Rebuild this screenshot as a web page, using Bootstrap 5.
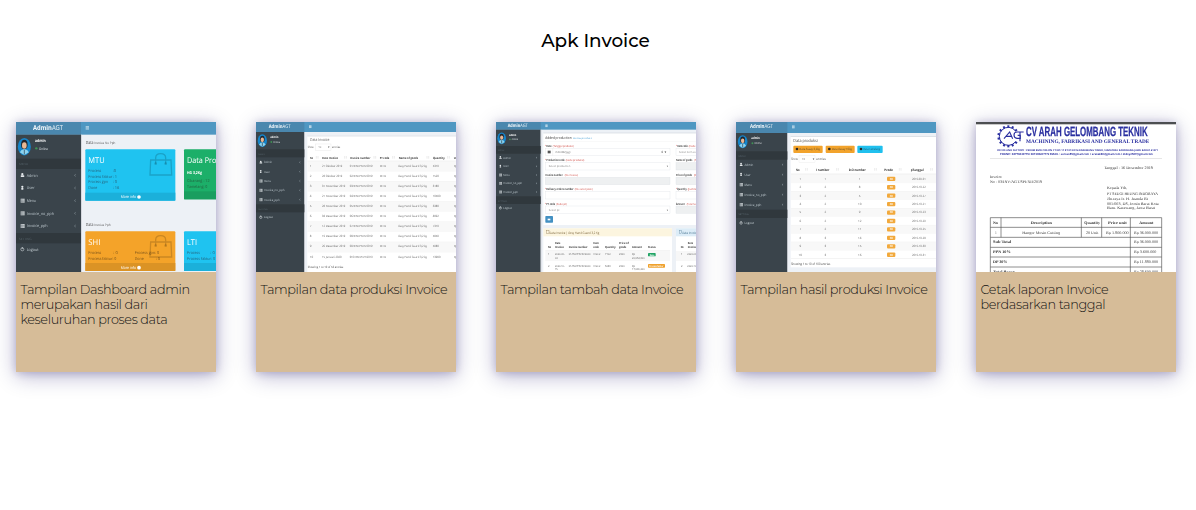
<!DOCTYPE html>
<html lang="id">
<head>
<meta charset="utf-8">
<meta name="viewport" content="width=device-width, initial-scale=1">
<title>Apk Invoice</title>
<link href="https://cdn.jsdelivr.net/npm/bootstrap@5.3.0/dist/css/bootstrap.min.css" rel="stylesheet">
<style>
body { font-family: Montserrat, Inter, sans-serif; color: #000; background: #fff; }
main { min-height: 510px; padding-top: 28px; }
.page-title { font-size: 18.4px; font-weight: 500; line-height: 24px; margin: 1px 5px 69px 0; color: #000; }
.gallery { gap: 40px; padding-left: 16px; }
.shot { width: 200px; height: 250px; background: #d6bc98; box-shadow: 0 1px 8px 0 rgba(20,10,100,.2), 0 4px 20px 0 rgba(20,10,100,.3); }
.shot svg { display: block; width: 200px; height: 150px; font-family: "Open Sans", sans-serif; text-rendering: geometricPrecision; }
.shot .soft { filter: blur(1.4px); }
.shot p { font-size: 12.8px; letter-spacing: -.36px; font-weight: 300; line-height: 15px; margin: 0; padding: 10px 0 0 4.5px; white-space: nowrap; color: #111; }
</style>
</head>
<body>
<main>
<h1 class="page-title text-center">Apk Invoice</h1>
<section class="gallery d-flex">
  <article class="shot flex-shrink-0"><svg id="dash" viewBox="48 36 600 450"></svg>
    <p>Tampilan Dashboard admin<br>merupakan hasil dari<br>keseluruhan proses data</p></article>
  <article class="shot flex-shrink-0"><svg id="list" viewBox="33 36 600 450"></svg>
    <p>Tampilan data produksi Invoice</p></article>
  <article class="shot flex-shrink-0"><svg id="form" viewBox="33 36 600 450"></svg>
    <p>Tampilan tambah data Invoice</p></article>
  <article class="shot flex-shrink-0"><svg id="prod" viewBox="33 36 600 450"></svg>
    <p>Tampilan hasil produksi Invoice</p></article>
  <article class="shot flex-shrink-0"><svg id="paper" viewBox="33 36 600 450"></svg>
    <p>Cetak laporan Invoice<br>berdasarkan tanggal</p></article>
</section>
</main>
<script src="https://cdn.jsdelivr.net/npm/bootstrap@5.3.0/dist/js/bootstrap.bundle.min.js"></script>
<script>
// Drawing helpers: rectangle, text fitted to a width, and path
const R = (x, y, w, h, f, more = '') => `<rect x="${x}" y="${y}" width="${w}" height="${h}" fill="${f}" ${more}/>`;
const T = (x, y, s, size, f, w, more = '') => `<text x="${x}" y="${y}" font-size="${size}" fill="${f}" ${w ? `textLength="${w}" lengthAdjust="spacingAndGlyphs"` : ''} ${more}>${s}</text>`;
const P = (d, stroke, w = 1, fill = 'none') => `<path d="${d}" stroke="${stroke}" stroke-width="${w}" fill="${fill}"/>`;
const B = 'font-weight="700"';
const put = (id, s) => document.getElementById(id).innerHTML = `<g class="soft">${s}</g>`;

// Left navigation with top bar, shared by the four admin screens
function shell(o) {
  const { x, w, head, k } = o, r = x + w;
  let s = R(x - 5, 31, 610, 460, '#edf1f6') + R(x - 5, 31, 610, head - 31, '#4f97c2') + R(x - 5, 31, w + 5, head - 31, '#4a87ae');
  s += R(x - 5, head, w + 5, 491 - head, '#3a444b') + R(r, head, 2, 491 - head, '#c9cdd2');
  s += `<text x="${o.logo}" y="${o.logoY}" font-size="${20 * k}" fill="#f4f8fb" textLength="${o.logoW}" lengthAdjust="spacingAndGlyphs"><tspan font-weight="700">Admin</tspan>AGT</text>`;
  const bx = r + 14, by = o.logoY - 9 * k;
  s += P(`M${bx} ${by}h${10 * k}m-${10 * k} ${3.6 * k}h${10 * k}m-${10 * k} ${3.6 * k}h${10 * k}`, '#e8f2f8', 2);
  const [ax, ay] = o.av, a = o.ar;
  s += `<ellipse cx="${ax}" cy="${ay}" rx="${a}" ry="${a * 1.35}" fill="#1685cb"/><ellipse cx="${ax}" cy="${ay - a * .35}" rx="${a * .5}" ry="${a * .72}" fill="#23262c"/><ellipse cx="${ax}" cy="${ay - a * .17}" rx="${a * .36}" ry="${a * .5}" fill="#e8b895"/>`;
  s += P(`M${ax - a * .7} ${ay + a * .85}Q${ax - a * .5} ${ay + a * .4} ${ax} ${ay + a * .35}Q${ax + a * .5} ${ay + a * .4} ${ax + a * .7} ${ay + a * .85}L${ax} ${ay + a * 1.3}Z`, 'none', 0, '#8ed3ee') + P(`M${ax} ${ay + a * .45}v${a * .75}`, '#26394c', 2);
  s += T(o.tx, o.nameY, 'admin', 12 * k, '#fff', 32 * k, B);
  s += `<circle cx="${o.tx + 4 * k}" cy="${o.onY - 4 * k}" r="${3.6 * k}" fill="#3f9354"/>` + T(o.tx + 12 * k, o.onY, 'Online', 10 * k, '#dce1e5', 27 * k);
  const [m0, m1] = o.bandA, [n0, n1] = o.bandB;
  s += R(x - 5, m0, w + 5, m1 - m0, '#30383d') + T(x + 9 * k, (m0 + m1) / 2 + 4, 'MENU', 9 * k, '#56636b', 27 * k);
  s += R(x - 5, n0, w + 5, n1 - n0, '#30383d') + T(x + 9 * k, (n0 + n1) / 2 + 4, 'SETTING', 9 * k, '#56636b', 38 * k);
  ['Admin', 'User', 'Menu', 'Invoice_no_pph', 'Invoice_pph'].forEach((n, i) => {
    const y = o.ys[i], ix = x + 14 * k;
    s += i < 2 ? `<circle cx="${ix + 5 * k}" cy="${y - 3.4 * k}" r="${3.4 * k}" fill="#e5e9ec"/>` + R(ix + (i ? 1.5 : 0) * k, y, (i ? 7 : 11) * k, 5 * k, '#e5e9ec', 'rx="2"')
      : R(ix, y - 6 * k, 12 * k, 12 * k, '#c4cacd') + P(`M${ix} ${y - 1.5 * k}h${12 * k}m-${12 * k} ${4 * k}h${12 * k}M${ix + 3.5 * k} ${y - 6 * k}v${12 * k}`, '#596269', 1);
    s += T(x + 32 * k, y + 4 * k, n, 12 * k, '#bcc7cd', [33, 23, 28, 82, 63][i] * k);
    s += P(`M${r - 16 * k} ${y - 3 * k}l-${3.5 * k} ${3 * k}l${3.5 * k} ${3 * k}`, '#a9b5bb', 1.4);
  });
  const y = o.out, ix = x + 19 * k;
  s += `<circle cx="${ix}" cy="${y}" r="${4.6 * k}" fill="none" stroke="#d0d7da" stroke-width="1.8"/>` + P(`M${ix} ${y - 7 * k}v${6 * k}`, '#d0d7da', 2) + T(x + 32 * k, y + 4 * k, 'Logout', 12 * k, '#c6d0d5', 36 * k);
  return s;
}

// Dashboard
let s = shell({ x: 48, w: 195, head: 74, k: 1, logo: 99, logoY: 59, logoW: 90, av: [73, 110], ar: 19.5, tx: 105, nameY: 97, onY: 119, bandA: [146, 177], bandB: [369, 400], ys: [196, 234, 272, 310, 348], out: 418 });
const bag = (x, y) => P(`M${x + 3} ${y + 20}h61l2 45h-65zM${x + 18} ${y + 31}v-17q0-13 15-13t15 13v17`, 'rgba(0,0,0,.17)', 4) + `<circle cx="${x + 18}" cy="${y + 31}" r="4" fill="rgba(0,0,0,.16)"/><circle cx="${x + 48}" cy="${y + 31}" r="4" fill="rgba(0,0,0,.16)"/>`;
const tile = (x, y, w, c, dark, h = 154) => R(x, y, w, h, c, 'rx="3"') + R(x, y + h - 24, w, 24, dark);
const info = (x, y) => T(x, y, 'More info', 12, '#fff', 46) + `<circle cx="${x + 55}" cy="${y - 4}" r="5.5" fill="#fff"/>`;
s += T(257, 101, 'Data', 13, '#444', 23) + T(283, 101, 'Invoice No Pph', 9.5, '#555', 63);
s += T(257, 347, 'Data', 13, '#444', 23) + T(283, 347, 'Invoice Pph', 9.5, '#555', 49);
s += tile(256, 118, 270, '#1fc3f0', '#1bb0da') + bag(449, 130) + T(265, 158, 'MTU', 24, '#fff', 49) + info(362, 265);
['Process|:0', 'Process faktur|: 1', 'Process gpn|: 0', 'Done|: 16'].forEach((v, i) => { const [a, b] = v.split('|'); s += T(265, 186 + i * 17, a, 12, '#27617a', [39, 72, 59, 27][i]) + T(338, 186 + i * 17, b, 12, '#27617a'); });
s += tile(552, 118, 105, '#1caf69', '#199e5f', 150) + T(561, 158, 'Data Produksi', 24, '#fff', 142) + T(561, 192, 'HG 3,2Kg', 12, '#fff', 45, B) + T(561, 216, 'Cikarang : 12', 12, '#23613f', 68) + T(561, 233, 'Tamelang: 0', 12, '#23613f', 61);
s += tile(256, 364, 270, '#f4a329', '#db9325', 119) + bag(449, 376) + T(265, 404, 'SHI', 24, '#fff', 36) + info(362, 477);
s += T(265, 431, 'Process', 12, '#76511b', 39) + T(340, 431, ': 0', 12, '#76511b') + T(265, 449, 'Process faktur: 0', 12, '#76511b', 84) + T(404, 431, 'Process gpn: 0', 12, '#76511b', 73) + T(404, 449, 'Done', 12, '#76511b', 27) + T(467, 449, ': 0', 12, '#76511b');
s += tile(552, 364, 105, '#1fc3f0', '#1bb0da', 119) + T(561, 404, 'LTI', 24, '#fff', 30) + T(561, 431, 'Process', 12, '#27617a', 39) + T(631, 431, ': 0', 12, '#27617a') + T(561, 449, 'Process faktur: 0', 12, '#27617a', 84);
put('dash', s);

// Sort marks in table headings
const sort = (x, y) => P(`M${x} ${y - 4}v8m5-8v8`, '#d5d5d5', 1.4);

// Invoice list
s = shell({ x: 33, w: 145, head: 66, k: .75, logo: 71, logoY: 54, logoW: 66, av: [52, 92], ar: 14, tx: 76, nameY: 83, onY: 99, bandA: [118, 142], bandB: [283, 307], ys: [157, 185, 213, 241, 269], out: 322 });
s += R(187, 77, 460, 420, '#fff') + R(187, 77, 460, 2, '#d3d8de') + T(195, 94, 'Data Invoice', 12, '#555', 58) + T(188, 115, 'Show', 9, '#555', 18) + R(211, 102, 47, 20, '#fff', 'stroke="#ddd"') + T(220, 115, '10', 8, '#777') + T(249, 115, '▾', 9, '#555') + T(261, 115, 'entries', 9, '#555', 25);
[[195, 'No', 9], [231, 'Data Invoice', 48], [315, 'Invoice number', 61], [404, 'PT code', 29], [461, 'Name of goods', 58], [564, 'Quantity', 35], [626, 'Unit price', 40]].forEach(a => s += T(a[0], 146, a[1], 9, '#333', a[2], B));
[214, 299, 387, 443, 546, 608].forEach(x => s += sort(x, 142));
s += R(188, 152, 450, 2, '#ededed');
const dates = ['21 Oktober 2019', '28 Oktober 2019', '07 November 2019', '21 November 2019', '28 November 2019', '04 Desember 2019', '12 Desember 2019', '19 Desember 2019', '26 Desember 2019', '15 Januari 2020'];
const qty = ['5319', '1520', '6180', '10580', '6380', '4892', '7319', '5859', '5980', '13980'];
dates.forEach((d, i) => {
  const y = 170 + i * 30.3;
  s += R(188, y - 17, 450, 30, i % 2 ? '#fff' : '#f8f8f8') + R(188, y - 17, 450, 1, '#eee');
  s += T(194, y, i + 1, 9, '#666') + T(231, y, d, 9, '#666', [61, 61, 70, 70, 70, 70, 70, 70, 70, 59][i]) + T(314, y, `0${i + 1}/INV/PN/X/2019`, 9, '#666', 69) + T(404, y, 'MTU', 9, '#666', 19) + T(460, y, 'Assy Hand Guard 3,2 kg', 9, '#666', 86) + T(563, y, qty[i], 9, '#666', qty[i].length * 4.7) + T(626, y, 'Rp 2900', 9, '#666');
});
s += T(188, 475, 'Showing 1 to 10 of 53 entries', 9, '#444', 107);
put('list', s);

// Production form
s = shell({ x: 33, w: 134, head: 59, k: .69, logo: 68, logoY: 51, logoW: 60, av: [50, 85], ar: 13, tx: 72, nameY: 77, onY: 91, bandA: [108, 131], bandB: [259, 282], ys: [143, 169, 195, 220, 246], out: 294 });
s += R(175, 69, 470, 276, '#fff') + R(175, 68, 470, 2, '#d3d8de') + T(181, 87, 'Added production', 11.5, '#444', 79) + T(264, 87, 'Home product', 7.5, '#4fa3d6', 56) + R(175, 94, 470, 1, '#eee');
const lab = (x, y, a, aw, b, bw, star) => (star ? T(x, y, '*', 9, '#d33', 3) : '') + T(x + (star ? 3 : 0), y, a, 9, '#444', aw, B) + T(x + aw + 6, y, b, 8, '#cf4a43', bw);
s += lab(181, 110, 'Date', 16, '(Tanggal produksi)', 63, 1) + lab(181, 154, 'Production code', 55, '(kode produksi)', 56, 1) + lab(181, 197, 'Invoice number', 52, '(No invoice)', 40) + lab(181, 240, 'Delivery orders number', 82, '(No surat jalan)', 54, 1) + lab(181, 284, 'PT code', 26, '(Kode pt)', 32, 1);
s += lab(573, 110, 'Item code', 32, '(Kode item)', 40, 1) + lab(573, 154, 'Name of goods', 49, '(Nama barang)', 50) + lab(573, 197, 'Price of goods', 48, '(Harga)', 40) + lab(573, 240, 'Quantity', 29, '(Jumlah)', 35, 1) + lab(573, 284, 'Amount', 26, '(Total harga)', 40);
[115, 158, 202, 245, 288].forEach((y, i) => { s += R(181, y, 374, 22, i == 2 ? '#eef0f1' : '#fff', 'stroke="#dcdfe3"') + R(573, y, 80, 22, i == 1 || i == 2 || i == 4 ? '#eef0f1' : '#fff', 'stroke="#dcdfe3"'); });
s += R(188, 122, 9, 8, '#555') + P('M203 115v22', '#ddd') + T(211, 129, 'mm/dd/yyyy', 8, '#666', 46) + T(527, 129, '⇕ ▾', 9, '#444', 17) + T(191, 172, 'Select production', 8, '#888', 65) + T(545, 172, '▾', 8, '#666') + T(191, 302, 'Select pt', 8, '#888', 32) + T(545, 302, '▾', 8, '#666') + T(582, 129, 'Select item code', 8, '#888', 60);
s += R(181, 318, 23, 20, '#4390c2', 'rx="2"') + R(188, 326, 8, 5, '#fff');
[[175, 386, '#fcf5df', '#806b42'], [573, 80, '#dcecf7', '#4d7893']].forEach(([x, w, c, f]) => {
  s += R(x, 355, w, 140, '#fff') + R(x, 355, w, 24, c) + R(x + 10, 362, 7, 9, 'none', `stroke="${f}"`) + T(x + 18, 371, 'Data Invoice | Assy Hand Guard 3,2 Kg', 10, f, 150);
});
s += R(181, 423, 374, 30, '#f7f7f7') + R(573, 423, 70, 30, '#f7f7f7') + R(181, 421, 374, 1, '#ddd');
[[189, 415, 'No', 9], [210, 402, 'Date', 16], [210, 415, 'Invoice', 27], [251, 415, 'Invoice number', 57], [325, 402, 'Item', 17], [325, 415, 'code', 17], [360, 415, 'Quantity', 32], [402, 402, 'Price of', 29], [402, 415, 'goods', 22], [441, 415, 'Amount', 30], [489, 415, 'Status', 23], [587, 415, 'No', 9], [608, 402, 'Date', 16], [608, 415, 'Invoice', 27]].forEach(a => s += T(a[0], a[1], a[2], 8.5, '#333', a[3], B));
[[436, '1', '2020-09-', '04', '7132', '20,654,800'], [470, '2', '2020-10-', '15', '5058', '17,680,200']].forEach(([y, n, d, e, q, a]) => {
  s += T(189, y, n, 8, '#666') + T(210, y, d, 8, '#666', 29) + T(210, y + 11, e, 8, '#666', 8) + T(251, y, '01/INV/PN/IX/2020', 8, '#666', 65) + T(325, y, 'HG3.2', 8, '#666', 21) + T(360, y, q, 8, '#666', 17) + T(402, y, '2900', 8, '#666', 17) + T(441, y, 'Rp', 8, '#666', 9) + T(441, y + 11, a, 8, '#666', 38) + T(588, y, n, 8, '#666') + T(607, y, d, 8, '#666', 29);
});
s += R(489, 429, 23, 10, '#20a464', 'rx="2"') + T(494, 437, 'Done', 7, '#fff', 14, B) + R(489, 462, 51, 11, '#efa12c', 'rx="2"') + T(493, 470, 'Process faktur', 7, '#fff', 42, B);
put('form', s);

// Production results
s = shell({ x: 33, w: 154, head: 69, k: .8, logo: 75, logoY: 55, logoW: 69, av: [53, 95], ar: 14.5, tx: 79, nameY: 86, onY: 103, bandA: [124, 149], bandB: [299, 324], ys: [164, 194, 224, 254, 284], out: 339 });
s += R(197, 80, 440, 392, '#fff') + R(197, 79, 440, 2, '#d3d8de') + T(205, 97, 'Data produksi', 12.5, '#444', 73);
[[205, 88, '#f2a32c', 'Data Assay 3,2kg', '#614d2b'], [302, 87, '#f2a32c', 'Data Assay 10kg', '#614d2b'], [397, 76, '#20c0ee', 'Data Tamelang', '#205a70']].forEach(([x, w, c, n, f]) => s += R(x, 107, w, 22, c, 'rx="3"') + `<circle cx="${x + 11}" cy="117" r="4" fill="#282828"/>` + T(x + 18, 121, n, 9, f, w - 26));
s += T(198, 150, 'Show', 9.5, '#555', 20) + R(222, 137, 48, 20, '#fff', 'stroke="#e3e3e3"') + T(231, 150, '10', 8.5, '#777') + T(263, 150, '▾', 9, '#444') + T(274, 150, 'entries', 9.5, '#555', 29);
[[213, 'No', 11], [273, 'I number', 40], [371, 'D.O number', 51], [478, 'Pcode', 26], [557, 'pTanggal', 39]].forEach(a => s += T(a[0], 182, a[1], 9.5, '#333', a[2], B));
[242, 335, 449, 523, 617].forEach(x => s += sort(x, 178));
s += R(198, 191, 435, 2, '#e9e9e9');
const dn = [1, 8, 5, 10, 9, 12, 11, 14, 15, 16], im = [1, 2, 2, 2, 2, 2, 2, 3, 3, 3], dt = ['09-01', '10-22', '10-27', '10-21', '10-23', '10-29', '10-25', '10-28', '10-30', '10-31'];
dn.forEach((d, i) => {
  const y = 209 + i * 25.3;
  s += R(198, y - 16, 435, 25, i % 2 ? '#fff' : '#f8f8f8') + R(198, y - 16, 435, 1, '#eee') + T(226, y, i + 1, 9, '#666', 0, 'text-anchor="middle"') + T(301, y, im[i], 9, '#666', 0, 'text-anchor="middle"') + T(404, y, d, 9, '#666', 0, 'text-anchor="middle"') + R(486, y - 9, 25, 13, '#f2a93c', 'rx="3"') + T(494, y, 'CK', 8, '#fff', 9, B) + T(561, y, '2019-' + dt[i], 9, '#666', 41);
});
s += R(198, 444, 435, 1, '#ddd') + T(198, 465, 'Showing 1 to 10 of 100 entries', 9.5, '#444', 118);
put('prod', s);

// Printed invoice
const serif = 'font-family="Liberation Serif"', blue = '#2a2fa0';
s = R(28, 31, 610, 460, '#fff') + R(28, 31, 610, 11, '#4c4e51') + R(28, 42, 610, 3, '#c8c8c8');
let gear = '';
for (let i = 0; i < 14; i++) if (i !== 3 && i !== 4) gear += `<rect x="127" y="46" width="6" height="7" fill="${blue}" transform="rotate(${i * 360 / 14} 130 79)"/>`;
s += gear + P('M151 62A27 27 0 1 0 151 96', blue, 3) + P('M117 86L134 66L143 86M124 79h17M176 66h-20q-9 0-9 9t9 10h10v-9h-8M165 66v28', blue, 3.4);
s += T(183, 79, 'CV ARAH GELOMBANG TEKNIK', 40, blue, 365, `${B} font-family="Liberation Sans Narrow, Liberation Sans" stroke="${blue}" stroke-width=".8"`);
s += T(183, 98, 'MACHINING, FABRIKASI AND GENERAL TRADE', 16, blue, 370, B + ' ' + serif);
s += T(96, 124, 'OFFICE AND FACTORY : PERUM BMD CIKLON CT NO 11 RT 012/014 KARAWANG TIMUR, SUMATERA KARAWANG JAWA BARAT 41371', 7.5, blue, 483, B) + T(105, 135, 'PHONE : 08770843715/ 081905207172 EMAIL : suroso55@gmail.com / aratek88@gmail.com / didoy2507@gmail.com', 8, blue, 459, B);
s += R(75, 145, 516, 1.5, '#ccc');
const Z = (x, y, t, w, more = '') => T(x, y, t, 12, '#333', w, serif + ' ' + more);
s += Z(417, 178, 'Tanggal : 16 Desember 2019', 147) + Z(75, 205, 'Invoice', 36) + Z(75, 220, 'No : 03/INV/AGT/SPI/XII/2019', 156) + Z(426, 237, 'Kepada Yth,', 61) + Z(426, 254, 'PT SEUGI HEUNG INDORAYA', 153) + Z(426, 271, 'Jln.raya Ir. H. Juanda Rt', 123) + Z(426, 284, '001/003, DS, Jomin Barat Kota', 155) + Z(426, 297, 'Baru. Karawang, Jawa Barat', 144);
s += P('M76 323H590M76 352H590M76 382H590M76 412H590M76 441H590M76 471H590M76 323V491M590 323V491M108 323V382M349 323V382M410 323V382M496 323V491', '#555', 2);
[[84, 'No', 15], [197, 'Description', 64], [358, 'Quantity', 47], [429, 'Price unit', 56], [523, 'Amount', 42]].forEach(a => s += Z(a[0], 342, a[1], a[2], B));
s += Z(91, 371, '1', 4) + Z(172, 371, 'Hanger Mesin Cutting', 113) + Z(363, 371, '20 Unit', 37) + Z(423, 371, 'Rp 1.800.000', 68);
[['Sub Total', 400, 55], ['PPN 10%', 430, 53], ['DP 30%', 460, 43], ['Total Bayar', 490, 65]].forEach(a => s += Z(84, a[1], a[0], a[2], B));
[['Rp 36.000.000', 371, 72], ['Rp 36.000.000', 400, 72], ['Rp 3.600.000', 430, 67], ['Rp 11.880.000', 460, 72], ['Rp 28.600.000', 490, 72]].forEach(a => s += Z(507, a[1], a[0], a[2]));
put('paper', s);
</script>
</body>
</html>
